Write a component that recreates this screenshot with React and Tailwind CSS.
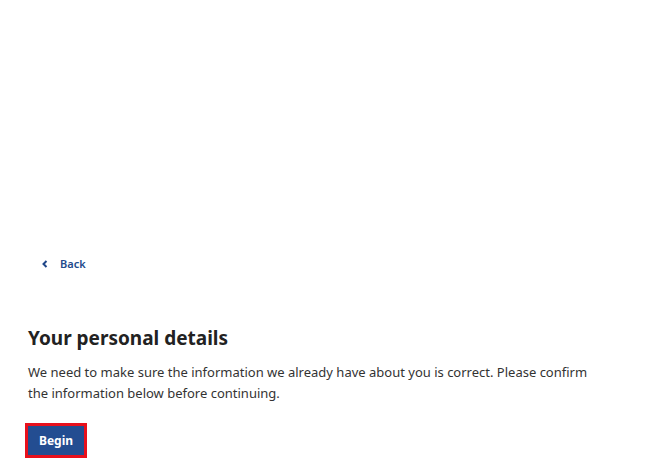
export default function App() {
  return (
    <div className="w-[650px] h-[475px] bg-white overflow-hidden" style={{ fontFamily: '"Noto Sans", "Open Sans", sans-serif' }}>
      <div className="pl-[28px] pt-[256px]">
        <a className="flex items-center gap-[12px] ml-[14px] text-[11px] font-semibold text-[#234a8c] leading-[16px]">
          <svg width="6" height="8" viewBox="0 0 6 8" className="shrink-0">
            <path d="M4.5 1 L1.5 4 L4.5 7" fill="none" stroke="#1f4688" strokeWidth="2" />
          </svg>
          <span>Back</span>
        </a>
        <h1 className="mt-[52px] text-[19px] font-bold text-[#222] leading-[28px]">Your personal details</h1>
        <p className="mt-[10px] text-[13px] text-[#333] leading-[21px] w-[570px]">
          We need to make sure the information we already have about you is correct. Please confirm the information below before continuing.
        </p>
        <div className="mt-[19px] -ml-[3px] inline-block border-[3px] border-[#e8101c]">
          <button className="bg-[#234d91] text-white text-[12px] font-bold w-[56px] h-[29px] flex items-center justify-center">Begin</button>
        </div>
      </div>
    </div>
  );
}
